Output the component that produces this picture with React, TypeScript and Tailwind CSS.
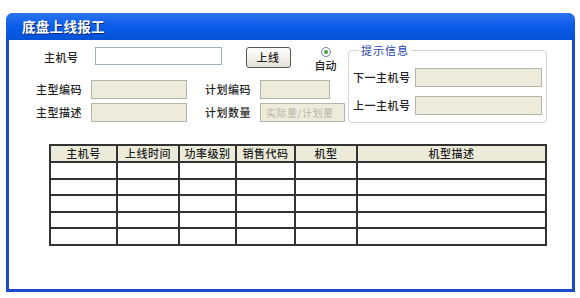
import React from 'react';

const font = { fontFamily: '"Noto Sans CJK SC", "Noto Sans", sans-serif' };

const columns = [
  { title: '主机号', width: 67 },
  { title: '上线时间', width: 62 },
  { title: '功率级别', width: 57 },
  { title: '销售代码', width: 59 },
  { title: '机型', width: 62 },
  { title: '机型描述', width: 189 },
];

function Label({ text, className = '' }: { text: string; className?: string }) {
  return (
    <span className={`text-[11px] leading-[19px] font-medium tracking-[0.5px] text-[#222] whitespace-nowrap ${className}`}>
      {text}
    </span>
  );
}

function ReadOnlyBox({ className = '', placeholder }: { className?: string; placeholder?: string }) {
  return (
    <div
      className={`h-[19px] bg-[#ecebdc] border border-[#b4b4a8] text-[10px] leading-[17px] pl-[5px] text-[#b8b8a8] tracking-[0.5px] ${className}`}
    >
      {placeholder}
    </div>
  );
}

export default function App() {
  return (
    <div className="w-[580px] h-[298px] bg-white pt-[13px] pl-[6px]" style={font}>
      <div className="w-[569px] h-[279px] rounded-t-[7px] bg-[#1a4ac8] flex flex-col">
        <div className="h-[27px] rounded-t-[7px] bg-gradient-to-b from-[#2a72f0] via-[#0a5ce8] to-[#0652d6] flex items-center pl-[16px]">
          <span className="text-[13.5px] font-bold text-white tracking-[0.3px] [text-shadow:1px_1px_0_#0a2a70]">
            底盘上线报工
          </span>
        </div>

        <div className="flex-1 mx-[3px] mb-[3px] bg-white">
          <div className="flex">
            {/* left form */}
            <div className="w-[339px] pt-[7px]">
              <div className="flex items-start h-[21px]">
                <Label text="主机号" className="ml-[35px] mt-[1px]" />
                <div className="ml-[16px] w-[127px] h-[18px] bg-white border border-[#9fb0c0]" />
                <button className="ml-[24px] w-[45px] h-[21px] rounded-[3px] border border-[#555] bg-gradient-to-b from-white to-[#e4e2d6] text-[11px] font-medium text-[#222] tracking-[0.5px] leading-[19px]">
                  上线
                </button>
                <div className="ml-[25px] w-[20px] flex flex-col items-center">
                  <div className="w-[10px] h-[10px] rounded-full border border-[#6f8296] bg-white flex items-center justify-center">
                    <div className="w-[4px] h-[4px] rounded-full bg-[#3ba33b]" />
                  </div>
                  <span className="mt-[1px] text-[11px] leading-[14px] font-medium text-[#222] whitespace-nowrap">自动</span>
                </div>
              </div>

              <div className="flex items-start mt-[12px]">
                <Label text="主型编码" className="w-[73px] text-right" />
                <ReadOnlyBox className="ml-[9px] w-[96px]" />
                <Label text="计划编码" className="ml-[18px] w-[46px]" />
                <ReadOnlyBox className="ml-[9px] w-[70px]" />
              </div>

              <div className="flex items-start mt-[4px]">
                <Label text="主型描述" className="w-[73px] text-right" />
                <ReadOnlyBox className="ml-[9px] w-[96px]" />
                <Label text="计划数量" className="ml-[18px] w-[46px]" />
                <ReadOnlyBox className="ml-[9px] w-[85px]" placeholder="实际量/计划量" />
              </div>
            </div>

            {/* hint fieldset */}
            <div className="relative mt-[10px] w-[199px] h-[73px] rounded-[4px] border border-[#d4d4d4] pt-[17px] pl-[4px]">
              <span className="absolute left-[10px] top-[-8px] bg-white px-[2px] text-[11px] leading-[14px] tracking-[1px] text-[#1c3fb4]">
                提示信息
              </span>
              <div className="flex items-start">
                <Label text="下一主机号" className="w-[62px]" />
                <ReadOnlyBox className="w-[127px]" />
              </div>
              <div className="flex items-start mt-[9px]">
                <Label text="上一主机号" className="w-[62px]" />
                <ReadOnlyBox className="w-[127px]" />
              </div>
            </div>
          </div>

          <table className="ml-[40px] mt-[21px] w-[496px] table-fixed border-collapse border-2 border-[#333]">
            <colgroup>
              {columns.map((c) => (
                <col key={c.title} style={{ width: c.width }} />
              ))}
            </colgroup>
            <thead>
              <tr className="h-[17px] bg-[#ecebda]">
                {columns.map((c) => (
                  <th
                    key={c.title}
                    className="border-2 border-[#333] p-0 text-[11px] leading-[13px] font-medium text-[#222] tracking-[0.5px]"
                  >
                    {c.title}
                  </th>
                ))}
              </tr>
            </thead>
            <tbody>
              {[0, 1, 2, 3, 4].map((r) => (
                <tr key={r} className="h-[16.6px]">
                  {columns.map((c) => (
                    <td key={c.title} className="border-2 border-[#333] p-0" />
                  ))}
                </tr>
              ))}
            </tbody>
          </table>
        </div>
      </div>
    </div>
  );
}
